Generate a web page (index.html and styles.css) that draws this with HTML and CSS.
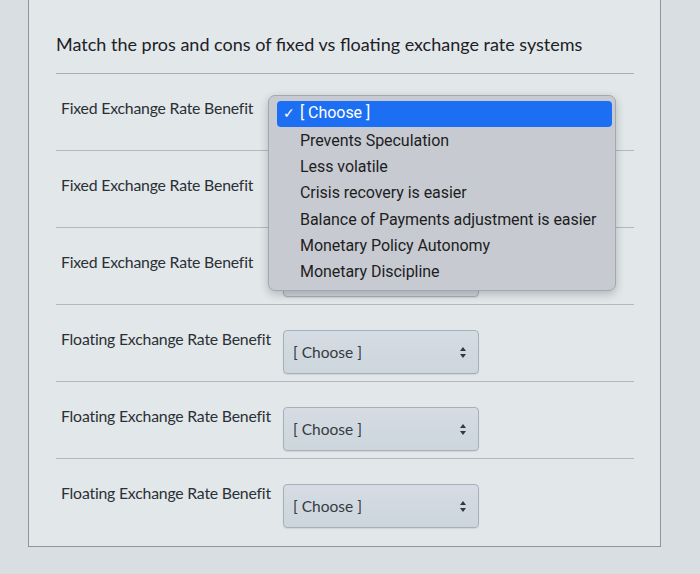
FILE: index.html
```html
<!DOCTYPE html>
<html>
<head>
<meta charset="utf-8">
<link rel="stylesheet" href="styles.css">
</head>
<body>
<div class="page">
  <div class="card">
    <h1 class="title">Match the pros and cons of fixed vs floating exchange rate systems</h1>
    <div class="rows">
      <div class="row">
        <div class="label">Fixed Exchange Rate Benefit</div>
        <div class="select-wrap">
          <div class="select covered"><span class="val">[ Choose ]</span><span class="arrows"></span></div>
          <div class="popup">
            <div class="opt active"><span class="check">✓</span>[ Choose ]</div>
            <div class="opt">Prevents Speculation</div>
            <div class="opt">Less volatile</div>
            <div class="opt">Crisis recovery is easier</div>
            <div class="opt">Balance of Payments adjustment is easier</div>
            <div class="opt">Monetary Policy Autonomy</div>
            <div class="opt">Monetary Discipline</div>
          </div>
        </div>
      </div>
      <div class="row">
        <div class="label">Fixed Exchange Rate Benefit</div>
        <div class="select-wrap">
          <div class="select covered"><span class="val">[ Choose ]</span><span class="arrows"></span></div>
        </div>
      </div>
      <div class="row">
        <div class="label">Fixed Exchange Rate Benefit</div>
        <div class="select-wrap">
          <div class="select covered"><span class="val">[ Choose ]</span><span class="arrows"></span></div>
        </div>
      </div>
      <div class="row">
        <div class="label">Floating Exchange Rate Benefit</div>
        <div class="select-wrap">
          <div class="select"><span class="val">[ Choose ]</span><span class="arrows"></span></div>
        </div>
      </div>
      <div class="row">
        <div class="label">Floating Exchange Rate Benefit</div>
        <div class="select-wrap">
          <div class="select"><span class="val">[ Choose ]</span><span class="arrows"></span></div>
        </div>
      </div>
      <div class="row last">
        <div class="label">Floating Exchange Rate Benefit</div>
        <div class="select-wrap">
          <div class="select"><span class="val">[ Choose ]</span><span class="arrows"></span></div>
        </div>
      </div>
    </div>
  </div>
</div>
</body>
</html>
```
FILE: styles.css
```css
html, body {
  margin: 0;
  padding: 0;
}
body {
  background: #d9dee2;
  font-family: Lato, "Liberation Sans", sans-serif;
  color: #2b3238;
  width: 700px;
  height: 574px;
  overflow: hidden;
}
.page {
  padding-left: 28px;
}
.card {
  width: 633px;
  height: 548px;
  margin-top: -1px;
  background: #e2e7ea;
  border: 1px solid #8e969c;
  box-sizing: border-box;
  padding: 0 26px 0 27px;
}
.title {
  margin: 0;
  padding-top: 31px;
  height: 42px;
  font-size: 18px;
  font-weight: 400;
  line-height: 26px;
  color: #1c2126;
  border-bottom: 1px solid #a9b0b5;
  white-space: nowrap;
}
.row {
  display: flex;
  align-items: flex-start;
  height: 77px;
  box-sizing: border-box;
  padding-top: 23px;
  padding-left: 5px;
  border-bottom: 1px solid #b3babf;
}
.row.last {
  border-bottom: none;
}
.label {
  width: 222px;
  margin-top: 0;
  font-size: 15.8px;
  line-height: 21px;
  color: #2a3035;
  letter-spacing: -0.2px;
  white-space: nowrap;
}
.select-wrap {
  position: relative;
  margin-top: 2px;
}
.select {
  width: 196px;
  height: 44px;
  box-sizing: border-box;
  border: 1px solid #a7b0b8;
  border-radius: 4px;
  background: linear-gradient(#d5dce3, #cdd5dd);
  display: flex;
  align-items: center;
  justify-content: space-between;
  padding: 0 12px 0 9px;
  font-size: 15.5px;
  color: #343b41;
  box-shadow: 0 1px 1px rgba(0,0,0,0.08);
}
.select.covered .val,
.select.covered .arrows {
  visibility: hidden;
}
.arrows {
  width: 6px;
  height: 11px;
  position: relative;
}
.arrows::before, .arrows::after {
  content: "";
  position: absolute;
  left: 0;
  border-left: 3px solid transparent;
  border-right: 3px solid transparent;
}
.arrows::before {
  top: 0;
  border-bottom: 4px solid #33383d;
}
.arrows::after {
  bottom: 0;
  border-top: 4px solid #33383d;
}
.popup {
  position: absolute;
  left: -15px;
  top: -4px;
  width: 348px;
  height: 196px;
  box-sizing: border-box;
  padding: 5px 3px 0 8px;
  background: #c7cad1;
  border: 1px solid #a4a8ae;
  border-radius: 7px;
  box-shadow: 0 3px 10px rgba(0,0,0,0.22);
  font-family: Roboto, "Liberation Sans", sans-serif;
  z-index: 5;
}
.opt {
  height: 26.2px;
  line-height: 26.2px;
  padding-left: 23px;
  font-size: 16px;
  color: #1d1e22;
  white-space: nowrap;
  letter-spacing: -0.05px;
}
.opt.active {
  height: 26px;
  background: #1c6ff2;
  color: #ffffff;
  border-radius: 4px;
  padding-left: 6px;
  line-height: 23px;
  margin-bottom: 1px;
}
.check {
  display: inline-block;
  width: 17px;
  font-size: 14px;
}
```
